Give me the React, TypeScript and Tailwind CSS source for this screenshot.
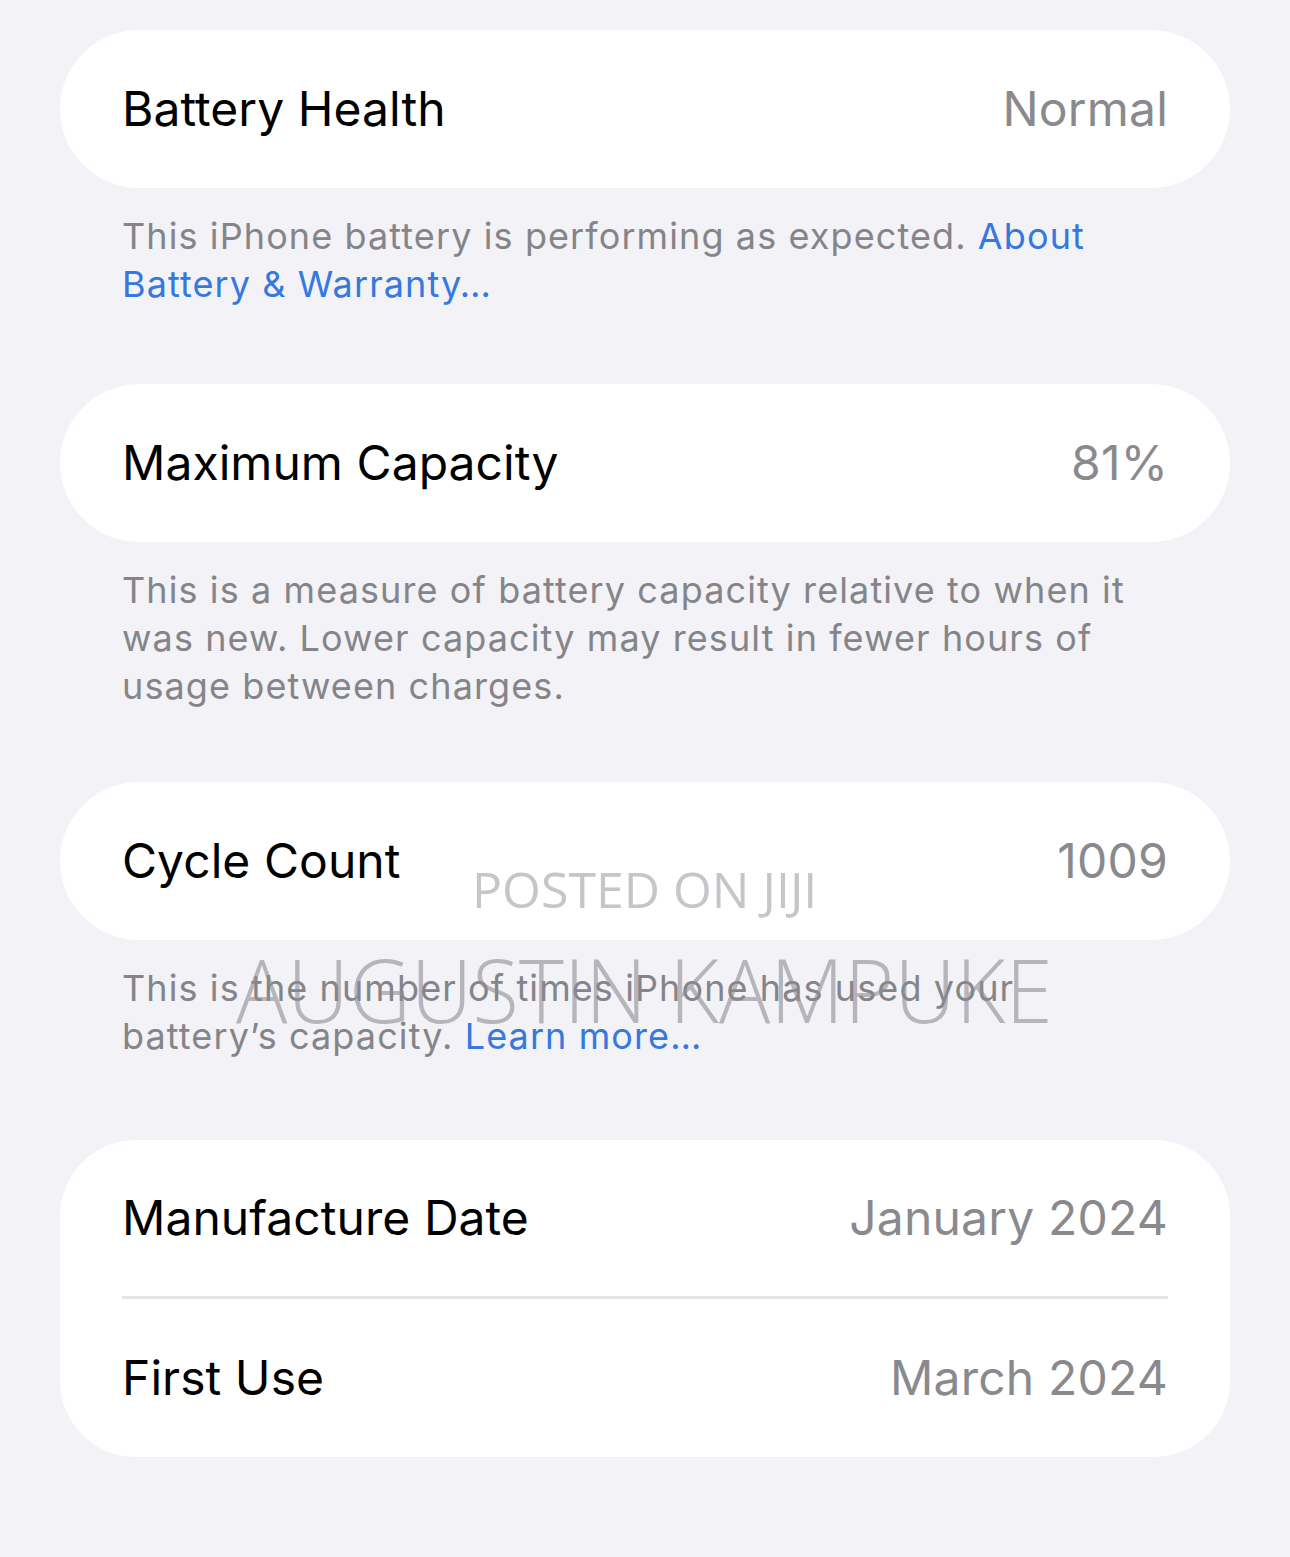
import React from 'react';

const font = { fontFamily: 'Inter, "Noto Sans", sans-serif' };

function Card({ children }: { children: React.ReactNode }) {
  return <div className="mx-[60px] rounded-[79px] bg-white px-[62px]">{children}</div>;
}

function Row({ label, value, h = 'h-[158px]' }: { label: string; value: string; h?: string }) {
  return (
    <div className={`flex items-center justify-between ${h}`}>
      <span className="text-[48px] tracking-[0.05px] text-black">{label}</span>
      <span className="text-[48px] tracking-[0.2px] text-[#8a8a8e]">{value}</span>
    </div>
  );
}

function Footer({ children, bottom }: { children: React.ReactNode; bottom: string }) {
  return (
    <p
      className={`mx-[60px] px-[62px] pt-[24px] text-[36px] leading-[48px] tracking-[1.1px] text-[#858589] ${bottom}`}
    >
      {children}
    </p>
  );
}

export default function App() {
  return (
    <div className="relative min-h-[1557px] w-[1290px] overflow-hidden bg-[#f2f2f7] pt-[30px]" style={font}>
      <Card>
        <Row label="Battery Health" value="Normal" />
      </Card>
      <Footer bottom="pb-[76px]">
        This iPhone battery is performing as expected.{' '}
        <span className="text-[#3478e0]">About Battery &amp; Warranty…</span>
      </Footer>

      <Card>
        <Row label="Maximum Capacity" value="81%" />
      </Card>
      <Footer bottom="pb-[72px]">
        This is a measure of battery capacity relative to when it was new. Lower capacity may result in fewer
        hours of usage between charges.
      </Footer>

      <Card>
        <Row label="Cycle Count" value="1009" />
      </Card>
      <Footer bottom="pb-[78px]">
        This is the number of times iPhone has used your battery’s capacity.{' '}
        <span className="text-[#3478e0]">Learn more…</span>
      </Footer>

      <div className="mx-[60px] mt-[2px] rounded-[76px] bg-white px-[62px]">
        <Row label="Manufacture Date" value="January 2024" h="h-[156px]" />
        <div className="h-[3px] bg-[#e4e4e6]" />
        <Row label="First Use" value="March 2024" h="h-[158px]" />
      </div>

      {/* watermark */}
      <div
        className="pointer-events-none absolute left-[472px] top-[864px] text-[50px] leading-none text-[#c6c6ca]"
        style={{ fontFamily: '"Open Sans", sans-serif' }}
      >
        POSTED ON JIJI
      </div>
      <div
        className="pointer-events-none absolute left-[236px] top-[945px] origin-left scale-x-[0.972] text-[88px] font-light leading-none text-[rgba(140,140,146,0.6)]"
        style={{ fontFamily: '"Open Sans", sans-serif' }}
      >
        AUGUSTIN KAMPUKE
      </div>
    </div>
  );
}
